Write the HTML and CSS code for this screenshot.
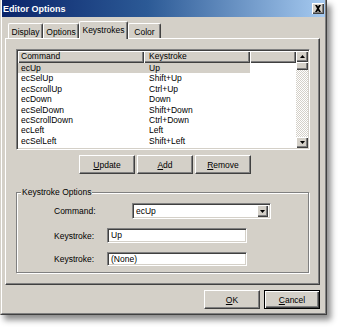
FILE: index.html
```html
<!DOCTYPE html>
<html>
<head>
<meta charset="utf-8">
<link rel="stylesheet" href="styles.css">
</head>
<body>
<div class="dialog">
  <div class="frame">
    <div class="titlebar">
      <span class="title">Editor Options</span>
      <span class="close"><svg width="8" height="7" viewBox="0 0 8 7"><path d="M1 0h2l1 1.5L5 0h2L5 3.5 7 7H5L4 5.5 3 7H1l2-3.5z" fill="#000"/></svg></span>
    </div>
    <div class="tabs">
      <div class="tab t-display">Display</div>
      <div class="tab t-options">Options</div>
      <div class="tab t-keys active">Keystrokes</div>
      <div class="tab t-color">Color</div>
    </div>
    <div class="sheet">
      <div class="listview">
        <div class="lv-main">
          <div class="lv-header">
            <div class="hcell c1">Command</div>
            <div class="hcell c2">Keystroke</div>
            <div class="hcell c3"></div>
          </div>
          <div class="lv-row selected"><span class="c1">ecUp</span><span class="c2">Up</span></div>
          <div class="lv-row"><span class="c1">ecSelUp</span><span class="c2">Shift+Up</span></div>
          <div class="lv-row"><span class="c1">ecScrollUp</span><span class="c2">Ctrl+Up</span></div>
          <div class="lv-row"><span class="c1">ecDown</span><span class="c2">Down</span></div>
          <div class="lv-row"><span class="c1">ecSelDown</span><span class="c2">Shift+Down</span></div>
          <div class="lv-row"><span class="c1">ecScrollDown</span><span class="c2">Ctrl+Down</span></div>
          <div class="lv-row"><span class="c1">ecLeft</span><span class="c2">Left</span></div>
          <div class="lv-row"><span class="c1">ecSelLeft</span><span class="c2">Shift+Left</span></div>
        </div>
        <div class="vscroll">
          <div class="sbtn"><svg width="5" height="3" viewBox="0 0 5 3"><path d="M2.5 0L5 3H0z" fill="#000"/></svg></div>
          <div class="thumb"></div>
          <div class="track"></div>
          <div class="sbtn"><svg width="5" height="3" viewBox="0 0 5 3"><path d="M0 0h5L2.5 3z" fill="#000"/></svg></div>
        </div>
      </div>
      <div class="btn-row">
        <button class="btn"><u>U</u>pdate</button>
        <button class="btn"><u>A</u>dd</button>
        <button class="btn"><u>R</u>emove</button>
      </div>
      <fieldset class="group">
        <legend>Keystroke Options</legend>
        <div class="field-row">
          <label class="lbl">Command:</label>
          <div class="combo">
            <span class="combo-text">ecUp</span>
            <span class="combo-btn"><svg width="5" height="3" viewBox="0 0 5 3"><path d="M0 0h5L2.5 3z" fill="#000"/></svg></span>
          </div>
        </div>
        <div class="field-row">
          <label class="lbl">Keystroke:</label>
          <div class="edit">Up</div>
        </div>
        <div class="field-row">
          <label class="lbl">Keystroke:</label>
          <div class="edit short">(None)</div>
        </div>
      </fieldset>
    </div>
    <div class="footer">
      <button class="btn"><u>O</u>K</button>
      <button class="btn default"><u>C</u>ancel</button>
    </div>
  </div>
</div>
</body>
</html>
```
FILE: styles.css
```css
* { box-sizing: border-box; }
html, body { margin: 0; padding: 0; background: #fff; }
body {
  width: 340px; height: 329px; overflow: hidden;
  font-family: "Liberation Sans", Arial, sans-serif;
  font-size: 8.5px; color: #000;
}
.dialog {
  width: 327px; height: 315px;
  background: #d4d0c8;
  border: 1px solid; border-top: 0;
  border-color: #d4d0c8 #404040 #404040 #d4d0c8;
  box-shadow: 4px 5px 6px rgba(0,0,0,0.45);
}
.frame {
  height: 100%;
  border: 1px solid; border-top: 0;
  border-color: #fff #808080 #808080 #fff;
  display: flex; flex-direction: column;
}
.titlebar {
  flex: none; height: 17px;
  background: linear-gradient(to right, #0a246a 0%, #2c5a96 45%, #a6caf0 100%);
  display: flex; align-items: center; justify-content: space-between;
  padding: 0 1px 0 1px;
}
.title { color: #fff; font-weight: bold; font-size: 9px; }
.close {
  width: 12px; height: 11px; background: #d4d0c8;
  display: flex; align-items: center; justify-content: center;
  box-shadow: inset 1px 1px #fff, inset -1px -1px #404040, inset -2px -2px #808080;
}
.tabs {
  flex: none; display: flex; align-items: flex-end;
  height: 17px; margin: 4px 0 0 6px;
  position: relative; z-index: 1;
}
.tab {
  height: 15px; display: flex; align-items: center; justify-content: center;
  border-top: 1px solid #fff; border-left: 1px solid #fff;
  border-right: 1px solid #404040;
  box-shadow: inset -1px 0 #808080;
  border-radius: 2px 2px 0 0;
  padding-top: 1px;
}
.t-display { width: 35px; }
.t-options { width: 36px; }
.t-keys { width: 49px; }
.t-color { width: 33px; }
.tab.active {
  height: 18px; margin-bottom: -1px;
  background: #d4d0c8; padding-bottom: 3px;
}
.sheet {
  flex: none; width: 315px; height: 247px; margin-left: 3px;
  border: 1px solid; border-color: #fff #404040 #404040 #fff;
  box-shadow: inset -1px -1px #808080;
  padding: 10px 0 0 10px;
}
.listview {
  width: 294px; height: 101px; background: #fff;
  border: 1px solid; border-color: #808080 #fff #fff #808080;
  box-shadow: inset 1px 1px #404040, inset -1px -1px #d4d0c8;
  padding: 1px;
  display: flex;
}
.lv-main { flex: 1; overflow: hidden; }
.lv-header { display: flex; height: 12px; }
.hcell {
  background: #d4d0c8; height: 12px; line-height: 11px;
  padding-left: 4px;
  box-shadow: inset 1px 1px #fff, inset -1px -1px #404040, inset -2px -2px #808080;
}
.c1 { width: 126px; flex: none; padding-left: 3px; }
.c2 { width: 106px; flex: none; padding-left: 5px; }
.c3 { flex: 1; }
.lv-row { display: flex; height: 10.4px; line-height: 11.6px; width: 232px; white-space: nowrap; }
.lv-row.selected { background: #d4d0c8; }
.vscroll { width: 12px; flex: none; display: flex; flex-direction: column; }
.sbtn {
  height: 11px; background: #d4d0c8; flex: none;
  display: flex; align-items: center; justify-content: center;
  box-shadow: inset 1px 1px #fff, inset -1px -1px #404040, inset -2px -2px #808080;
}
.thumb {
  height: 8px; flex: none; background: #d4d0c8;
  box-shadow: inset 1px 1px #fff, inset -1px -1px #404040, inset -2px -2px #808080;
}
.track { flex: 1; background: repeating-conic-gradient(#fff 0 25%, #d4d0c8 0 50%) 0 0 / 2px 2px; }
.btn-row { display: flex; gap: 2px; margin: 5px 0 0 63px; }
.btn {
  width: 56px; height: 19px; padding: 0; margin: 0;
  font: inherit; color: #000; background: #d4d0c8;
  border: 1px solid; border-color: #fff #404040 #404040 #fff;
  box-shadow: inset -1px -1px #808080;
}
.btn.default {
  border-color: #000;
  box-shadow: inset 1px 1px #fff, inset -1px -1px #404040, inset -2px -2px #808080;
}
.group {
  width: 293px; height: 86px; margin: 13px 0 0 0; padding: 0; min-width: 0;
  border: 1px solid #808080;
  box-shadow: inset 1px 1px #fff, 1px 1px #fff;
  display: flex; flex-direction: column;
}
.group legend { margin-left: 4px; padding: 0 1px; line-height: 10px; background: #d4d0c8; }
.field-row { display: flex; align-items: center; padding-left: 37px; }
.field-row:nth-of-type(1) { margin-top: 6px; }
.field-row + .field-row { margin-top: 9px; }
.lbl { width: 53px; flex: none; }
.combo {
  margin-left: 25px; width: 139px; height: 16px; background: #fff;
  border: 1px solid; border-color: #808080 #fff #fff #808080;
  box-shadow: inset 1px 1px #404040, inset -1px -1px #d4d0c8;
  display: flex; align-items: center; padding: 2px 2px 2px 3px;
}
.combo-text { flex: 1; }
.combo-btn {
  width: 11px; height: 12px; background: #d4d0c8;
  display: flex; align-items: center; justify-content: center;
  box-shadow: inset 1px 1px #fff, inset -1px -1px #404040, inset -2px -2px #808080;
}
.edit {
  width: 140px; height: 15px; background: #fff;
  border: 1px solid; border-color: #808080 #fff #fff #808080;
  box-shadow: inset 1px 1px #404040, inset -1px -1px #d4d0c8;
  padding: 0 3px; line-height: 13px;
}
.edit.short { height: 14px; line-height: 12px; }
.footer { display: flex; justify-content: flex-end; gap: 4px; margin-top: 5px; padding-right: 5px; }
```
